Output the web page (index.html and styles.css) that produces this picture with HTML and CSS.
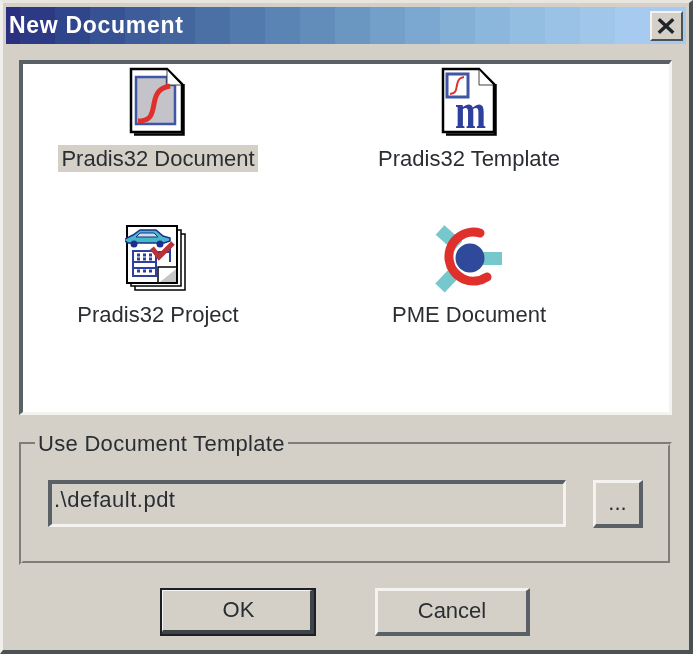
FILE: index.html
```html
<!DOCTYPE html>
<html lang="en">
  <head>
    <meta charset="UTF-8" />
    <title>New Document</title>
    <link rel="stylesheet" href="styles.css">
  </head>
  <body>
    <div class="window">
      <div class="titlebar">
        <span class="title">New Document</span>
        <div class="close">
          <svg width="30" height="24" viewBox="0 0 30 24">
            <path d="M7 5 L22 19 M22 5 L7 19" stroke="#202428" stroke-width="3.5" fill="none" />
          </svg>
        </div>
      </div>

      <div class="doc-list">
        <div class="doc-item">
          <svg class="doc-icon" width="60" height="76" viewBox="0 0 60 76">
            <path d="M3 3 H39 L54 18 V66 H3 Z" fill="#fff" stroke="#000" stroke-width="2.5" />
            <path d="M55.5 18 V68.5 H6" fill="none" stroke="#000" stroke-width="2.5" />
            <path d="M8 11 H39 V19 H47 V58 H8 Z" fill="#c3c3c9" stroke="#3f55a6" stroke-width="2.5" />
            <path d="M39 4 V19 H53" fill="#fff" stroke="#444" stroke-width="1" />
            <path d="M10 55 C22 55 24 50 26 38 C28 26 32 22 42 20" fill="none" stroke="#e0302c" stroke-width="5" />
          </svg>
          <span class="doc-label selected">Pradis32 Document</span>
        </div>

        <div class="doc-item">
          <svg class="doc-icon" width="60" height="76" viewBox="0 0 60 76">
            <path d="M4 3 H40 L55 18 V66 H4 Z" fill="#fff" stroke="#000" stroke-width="2.5" />
            <path d="M56.5 18 V68.5 H7" fill="none" stroke="#000" stroke-width="2.5" />
            <path d="M40 4 V19 H54" fill="#fff" stroke="#444" stroke-width="1" />
            <rect x="8" y="8" width="21" height="23" fill="#fff" stroke="#3f55a6" stroke-width="3" />
            <path d="M11 28 C17 27 17 25 18 19 C19 13 21 12 25 11" fill="none" stroke="#e0302c" stroke-width="2" />
            <text class="icon-m" x="16" y="62" textLength="31" lengthAdjust="spacingAndGlyphs">m</text>
          </svg>
          <span class="doc-label">Pradis32 Template</span>
        </div>

        <div class="doc-item">
          <svg class="doc-icon" width="66" height="76" viewBox="0 0 66 76">
            <path d="M10 12 H60 V68 H10 Z" fill="#fff" stroke="#000" stroke-width="1.5" />
            <path d="M6 8 H56 V64 H6 Z" fill="#fff" stroke="#000" stroke-width="1.5" />
            <path d="M2 4 H52 V61 H2 Z" fill="#fff" stroke="#000" stroke-width="2" />
            <path d="M33 61 V45 H52" fill="#fff" stroke="#000" stroke-width="1.5" />
            <path d="M35 60 L51 47 V60 Z" fill="#c6c6c6" />
            <rect x="8" y="29" width="23" height="25" fill="none" stroke="#2e3f9c" stroke-width="2" />
            <path d="M8 40 H30 M8 46 H30 M45 22 V40 M30 30 H45" fill="none" stroke="#2e3f9c" stroke-width="2" />
            <path d="M12 33 h3 M18 33 h3 M24 33 h3 M12 37 h3 M18 37 h3 M24 37 h3 M12 49 h3 M18 49 h3 M24 49 h3" stroke="#2e3f9c" stroke-width="3" />
            <path d="M-2 18 L8 13 L15 8 H31 L38 14 L45 16 V19 L39 21 H3 Z" fill="#45b9c9" stroke="#1c2f8c" stroke-width="1.5" />
            <path d="M15 11 H29 L33 15 H11 Z" fill="#c6dfe8" stroke="#1c2f8c" stroke-width="1" />
            <circle cx="9" cy="22" r="3.5" fill="#1c2f8c" />
            <circle cx="35" cy="22" r="3.5" fill="#1c2f8c" />
            <path d="M27 26 L34 35 L48 21" fill="none" stroke="#b83236" stroke-width="5" />
          </svg>
          <span class="doc-label">Pradis32 Project</span>
        </div>

        <div class="doc-item">
          <svg class="doc-icon" width="70" height="76" viewBox="0 0 70 76">
            <path d="M6 8 L24 24" stroke="#76c8cc" stroke-width="13" fill="none" />
            <path d="M6 66 L24 47" stroke="#76c8cc" stroke-width="13" fill="none" />
            <rect x="49" y="30" width="19" height="13" fill="#76c8cc" />
            <path d="M46 11 A24.5 24.5 0 1 0 53 55" fill="none" stroke="#e0302c" stroke-width="9" stroke-linecap="round" />
            <circle cx="36" cy="36" r="14.5" fill="#2f4a9a" />
          </svg>
          <span class="doc-label">PME Document</span>
        </div>
      </div>

      <fieldset class="template-group">
        <legend>Use Document Template</legend>
        <div class="template-row">
          <div class="template-field">.\default.pdt</div>
          <div class="btn browse">...</div>
        </div>
      </fieldset>

      <div class="actions">
        <div class="btn action default">OK</div>
        <div class="btn action">Cancel</div>
      </div>
    </div>
  </body>
</html>
```

FILE: styles.css
```css
* {
  box-sizing: border-box;
}

html,
body {
  margin: 0;
  padding: 0;
  background: #d4d0c8;
}

.window {
  width: 693px;
  height: 654px;
  padding: 4px 3px;
  background: #d4d0c8;
  border-top: 3px solid #e8e5df;
  border-left: 3px solid #f1efeb;
  border-right: 4px solid #4a5256;
  border-bottom: 4px solid #4a5256;
  font-family: "Liberation Sans", Arial, sans-serif;
  font-size: 22px;
  color: #2a2e32;
  filter: blur(0.4px);
}

.titlebar {
  height: 37px;
  display: flex;
  align-items: center;
  justify-content: space-between;
  padding: 0 3px 0 3px;
  background: linear-gradient(90deg,
    #2a2f80 0 14px, #2c3a85 14px 49px, #30468c 49px 84px, #375293 84px 119px,
    #3d5c99 119px 154px, #44669f 154px 189px, #4a70a6 189px 224px, #527aad 224px 259px,
    #5a84b4 259px 294px, #628dbb 294px 329px, #6a96c2 329px 364px, #73a0c9 364px 399px,
    #7ba8d0 399px 434px, #84b0d6 434px 469px, #8cb7dc 469px 504px, #93bde1 504px 539px,
    #9ac2e6 539px 574px, #a0c6ea 574px 609px, #a6caf0 609px);
}

.title {
  font-weight: bold;
  font-size: 23px;
  letter-spacing: 0.7px;
  color: #fff;
}

.close {
  width: 33px;
  height: 30px;
  display: flex;
  align-items: center;
  justify-content: center;
  background: #d4d0c8;
  border-top: 2px solid #f4f3f0;
  border-left: 2px solid #f4f3f0;
  border-right: 2px solid #4a5256;
  border-bottom: 2px solid #4a5256;
}

.doc-list {
  height: 355px;
  margin: 16px 14px 0 13px;
  display: grid;
  grid-template-columns: 270px 270px;
  grid-auto-rows: 156px;
  column-gap: 41px;
  align-content: start;
  padding-top: 2px;
  background: #fff;
  border-top: 4px solid #596166;
  border-left: 4px solid #596166;
  border-right: 3px solid #f4f3f0;
  border-bottom: 3px solid #f4f3f0;
}

.doc-item {
  display: flex;
  flex-direction: column;
  align-items: center;
}

.doc-icon {
  display: block;
  margin-bottom: 3px;
}

.doc-label {
  padding: 0 3px;
  line-height: 27px;
  white-space: nowrap;
}

.doc-label.selected {
  background: #d4d0c8;
}

.icon-m {
  font-family: "Liberation Serif", serif;
  font-weight: bold;
  font-size: 50px;
  fill: #2e3f9c;
}

.template-group {
  height: 134px;
  margin: 16px 14px 0 13px;
  padding: 0 0 0 25px;
  border: 4px groove #d4d0c8;
}

.template-group legend {
  padding: 0 3px;
  margin-left: -13px;
  line-height: 26px;
  letter-spacing: 0.3px;
}

.template-row {
  display: flex;
  gap: 27px;
  margin-top: 23px;
}

.template-field {
  width: 518px;
  height: 47px;
  padding: 0 2px;
  line-height: 32px;
  letter-spacing: 0.5px;
  border-top: 4px solid #596166;
  border-left: 4px solid #596166;
  border-right: 3px solid #f4f3f0;
  border-bottom: 3px solid #f4f3f0;
}

.btn {
  display: flex;
  align-items: center;
  justify-content: center;
  padding-bottom: 2px;
  background: #d4d0c8;
  border-top: 3px solid #f4f3f0;
  border-left: 3px solid #f4f3f0;
  border-right: 4px solid #596166;
  border-bottom: 4px solid #596166;
}

.browse {
  width: 50px;
  height: 48px;
}

.actions {
  display: flex;
  gap: 59px;
  margin-top: 23px;
  padding-left: 154px;
}

.action {
  width: 155px;
  height: 48px;
}

.action.default {
  width: 156px;
  padding-left: 4px;
  outline: 2px solid #1c2024;
  outline-offset: -2px;
  border-right: 6px solid #3c4448;
  border-bottom: 6px solid #3c4448;
}
```
